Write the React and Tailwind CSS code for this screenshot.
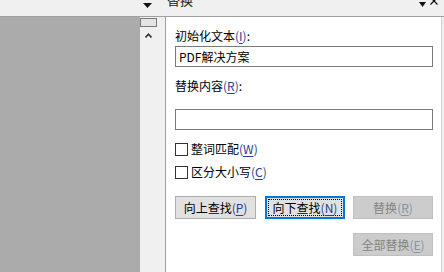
const FONT = { fontFamily: '"Noto Sans CJK SC", "Noto Sans", sans-serif' };

function Key({ k, disabled }) {
  return (
    <span className={disabled ? "text-[#8a93ad]" : "text-[#27408f]"}>
      (<span className="underline underline-offset-2">{k}</span>)
    </span>
  );
}

function Btn({ children, focused, disabled, className = "" }) {
  if (focused) {
    return (
      <div className={`h-[23px] border-2 border-[#0078d7] bg-[#e1e1e1] p-px ${className}`}>
        <div className="flex h-full items-center justify-center border border-dotted border-black leading-none">
          {children}
        </div>
      </div>
    );
  }
  return (
    <div
      className={`flex h-[23px] items-center justify-center border leading-none ${
        disabled
          ? "border-[#bfbfbf] bg-[#cccccc] text-[#838383]"
          : "border-[#adadad] bg-[#e1e1e1] text-black"
      } ${className}`}
    >
      {children}
    </div>
  );
}

function Check({ label, k }) {
  return (
    <div className="flex h-4 items-center">
      <div className="h-[13px] w-[13px] border border-[#333] bg-white" />
      <span className="ml-[3px]">
        {label}
        <Key k={k} />
      </span>
    </div>
  );
}

export default function App() {
  return (
    <div
      className="flex h-[272px] w-[444px] flex-col overflow-hidden bg-[#f0f0f0] text-[12px] text-black"
      style={FONT}
    >
      {/* title bar, partly scrolled off the top */}
      <div className="relative h-[17px] shrink-0 border-b border-[#a0a0a0] bg-[#f0f0f0]">
        <svg className="absolute left-[143px] top-[3px]" width="9" height="5" viewBox="0 0 9 5">
          <path d="M0 0h9L4.5 5z" fill="#111" />
        </svg>
        <span className="absolute left-[167px] top-[-8px] text-[13px] leading-4 text-[#222]">替换</span>
        <svg className="absolute left-[419px] top-[2px]" width="7" height="5" viewBox="0 0 7 5">
          <path d="M0 0h7L3.5 5z" fill="#111" />
        </svg>
        <svg className="absolute left-[430px] top-[-3px]" width="8" height="8" viewBox="0 0 8 8">
          <path d="M0.5 0.5l7 7M7.5 0.5l-7 7" stroke="#111" strokeWidth="1.2" />
        </svg>
      </div>

      <div className="flex flex-1">
        <div className="w-[140px] bg-[#ababab]" />
        <div className="flex w-[26px] flex-col border-r border-[#a0a0a0] bg-[#f0f0f0]">
          <div className="mt-px h-[9px] w-[17px] border border-[#7a7a7a] bg-[#e3e3e3]" />
          <svg className="ml-[5px] mt-[6px]" width="7" height="5" viewBox="0 0 7 5">
            <path d="M0.5 4.5L3.5 1.2L6.5 4.5" fill="none" stroke="#333" strokeWidth="1.6" />
          </svg>
        </div>

        <div className="flex w-[276px] flex-col border-r border-[#d0d0d0] bg-white pl-[9px]">
          <div className="mt-[11px] flex h-4 w-[258px] items-center">
            初始化文本<Key k="I" />:
          </div>
          <div className="mt-[2px] flex h-[21px] w-[258px] items-center border border-[#7a7a7a] pl-[3px]">
            PDF解决方案
          </div>

          <div className="mt-[11px] flex h-4 items-center">
            替换内容<Key k="R" />:
          </div>
          <div className="mt-[15px] h-[21px] w-[258px] border border-[#7a7a7a]" />

          <div className="mt-[11px]">
            <Check label="整词匹配" k="W" />
          </div>
          <div className="mt-[7px]">
            <Check label="区分大小写" k="C" />
          </div>

          <div className="mt-[16px] flex w-[258px]">
            <Btn className="w-[81px]">
              向上查找<Key k="P" />
            </Btn>
            <Btn focused className="ml-[9px] w-[80px]">
              向下查找<Key k="N" />
            </Btn>
            <Btn disabled className="ml-[8px] w-[80px]">
              替换<Key k="R" disabled />
            </Btn>
          </div>
          <div className="mt-[14px] flex w-[258px] justify-end">
            <Btn disabled className="w-[80px]">
              全部替换<Key k="E" disabled />
            </Btn>
          </div>
        </div>
      </div>
    </div>
  );
}
